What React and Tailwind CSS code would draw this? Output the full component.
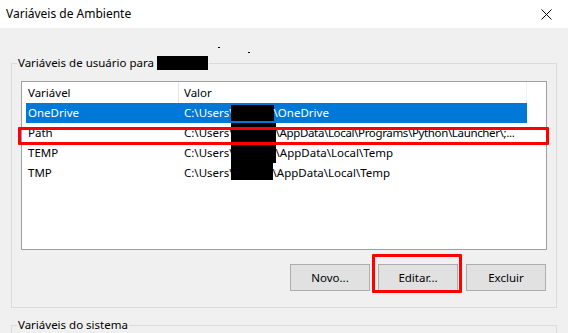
import React from 'react';

const rows = [
  { name: 'OneDrive', pre: 'C:\\Users\\', post: '\\OneDrive', box: 'h-[16px] w-[43px]', selected: true },
  { name: 'Path', pre: 'C:\\Users\\', post: '\\AppData\\Local\\Programs\\Python\\Launcher\\;...', box: 'h-[20px] w-[45px]', tight: true },
  { name: 'TEMP', pre: 'C:\\Users\\', post: '\\AppData\\Local\\Temp', box: 'h-[20px] w-[45px]' },
  { name: 'TMP', pre: 'C:\\Users\\', post: '\\AppData\\Local\\Temp', box: 'h-[17px] w-[42px] self-start' },
];

function Button({ children }) {
  return (
    <button className="w-[80px] h-[27px] bg-[#e1e1e1] border border-[#adadad] text-[11.5px] text-black flex items-center justify-center">
      {children}
    </button>
  );
}

export default function App() {
  return (
    <div className="w-[568px] h-[333px] overflow-hidden bg-[#f0f0f0] text-black text-[11.5px] leading-[16px] font-['Noto_Sans','Open_Sans',sans-serif]">
      {/* title bar */}
      <div className="h-[28px] bg-white flex items-center justify-between pl-[6px] pr-[16px]">
        <span className="text-[12px]">Variáveis de Ambiente</span>
        <svg width="11" height="11" viewBox="0 0 11 11" className="text-black">
          <path d="M0.5 0.5 L10.5 10.5 M10.5 0.5 L0.5 10.5" stroke="currentColor" strokeWidth="1" fill="none" />
        </svg>
      </div>

      {/* stray dots */}
      <div className="h-[27px] flex items-start">
        <span className="ml-[218px] mt-[19px] w-[2px] h-[1px] bg-black" />
        <span className="ml-[28px] mt-[24px] w-[2px] h-[1px] bg-black" />
      </div>

      {/* user variables */}
      <fieldset className="mx-[11px] border border-[#dcdcdc] p-0 pb-[16px]">
        <legend className="ml-[5px] px-[1px] flex items-center">
          Variáveis de usuário para
          <span className="inline-block ml-[3px] w-[51px] h-[14px] bg-black" />
        </legend>

        <div className="relative mt-[10px] mx-[9px] h-[169px] bg-white border border-[#a0a0a0]">
          <div className="flex h-[21px] items-center">
            <div className="w-[157px] shrink-0 h-full border-r border-[#e5e5e5] pl-[6px] flex items-center">Variável</div>
            <div className="w-[348px] shrink-0 h-full border-r border-[#f0f0f0] pl-[5px] flex items-center">Valor</div>
          </div>
          {rows.map(r => (
            <div
              key={r.name}
              className={`ml-[4px] w-[501px] h-[20px] flex items-center whitespace-nowrap ${r.selected ? 'bg-[#0078d7] text-white' : ''}`}
            >
              <div className="w-[156px] shrink-0 pl-[2px]">{r.name}</div>
              <div className="flex-1 min-w-0 overflow-hidden pl-[2px] h-full flex items-center">
                <span>{r.pre}</span>
                <span className={`ml-[-3px] shrink-0 bg-black ${r.box}`} />
                <span className={r.tight ? 'tracking-[-0.35px]' : ''}>{r.post}</span>
              </div>
            </div>
          ))}

          {/* highlight around Path */}
          <div className="absolute left-[-4px] top-[45px] w-[531px] h-[18px] border-[3px] border-[#ff0000] rounded-[1px]" />
        </div>

        <div className="mt-[14px] mr-[10px] flex justify-end gap-[8px]">
          <Button>Novo...</Button>
          <div className="relative">
            <Button>Editar...</Button>
            <div className="absolute left-[-6px] top-[-10px] w-[90px] h-[39px] border-[3px] border-[#ff0000] rounded-[1px]" />
          </div>
          <Button>Excluir</Button>
        </div>
      </fieldset>

      {/* system variables */}
      <fieldset className="mt-[9px] mx-[11px] border border-[#dcdcdc] p-0 h-[120px]">
        <legend className="ml-[5px] px-[1px]">Variáveis do sistema</legend>
      </fieldset>
    </div>
  );
}
